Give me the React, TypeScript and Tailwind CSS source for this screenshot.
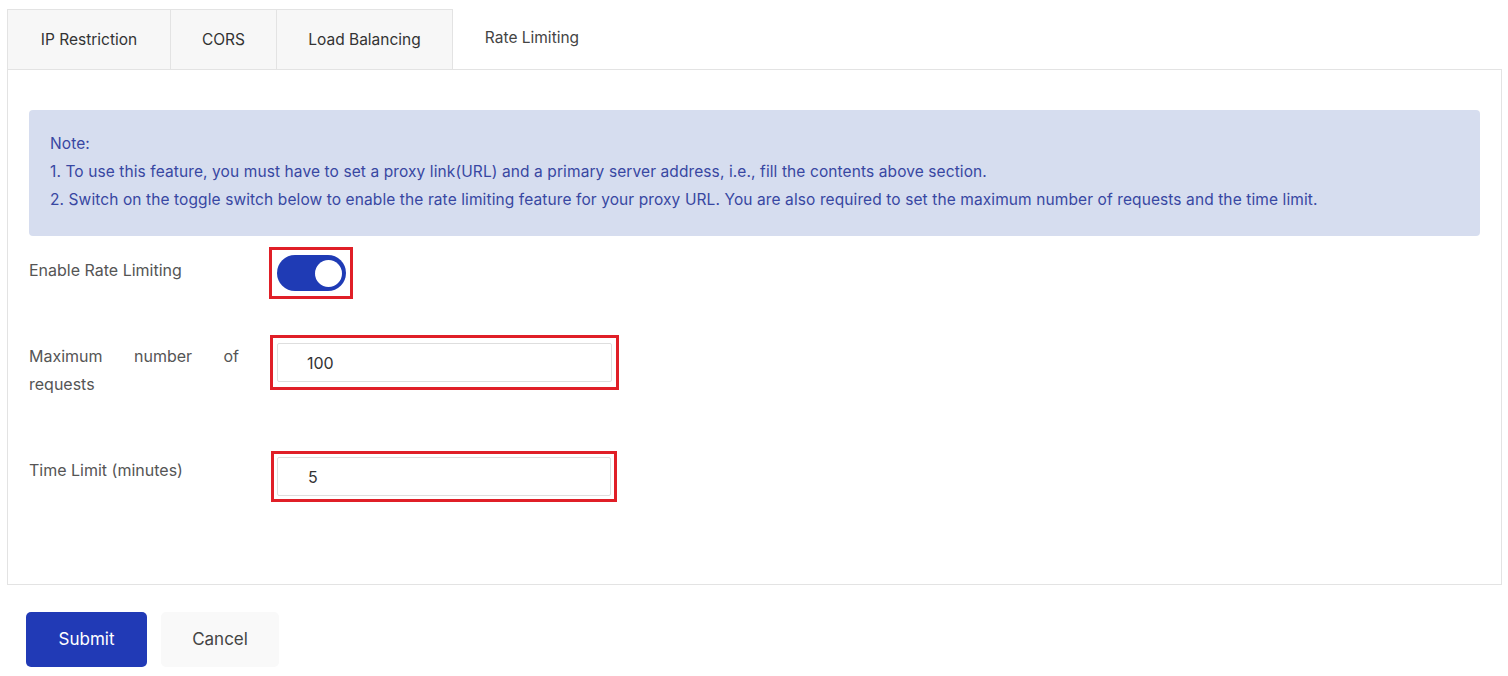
import { useState } from 'react';

const TABS = [
  { label: 'IP Restriction', w: 'w-[164px]' },
  { label: 'CORS', w: 'w-[106px]' },
  { label: 'Load Balancing', w: 'w-[176px]' },
  { label: 'Rate Limiting', w: 'w-[158px]' },
];

export default function App() {
  const [active, setActive] = useState(3);
  const [enabled, setEnabled] = useState(true);
  const [maxReq, setMaxReq] = useState('100');
  const [limit, setLimit] = useState('5');

  return (
    <div className="w-full h-[676px] bg-white pt-[9px] pl-[7px] pr-[6px] font-['Inter',sans-serif] text-[#333]">
      {/* Tabs */}
      <div className="flex h-[60px]">
        {TABS.map((t, i) => (
          <button
            key={t.label}
            onClick={() => setActive(i)}
            className={`${t.w} h-full text-[15.5px] ${
              i === active
                ? 'bg-white text-[#444] pb-[2px]'
                : 'bg-[#f7f7f7] border border-[#e3e3e3] border-b-0 border-l-0 first:border-l text-[#333]'
            }`}
          >
            {t.label}
          </button>
        ))}
      </div>

      {/* Panel */}
      <div className="border border-[#e3e3e3] h-[516px] px-[21px] pt-[40px]">
        <div className="bg-[#d6ddef] rounded-[4px] px-[21px] pt-[20px] pb-[22px] text-[15.5px] leading-[28px] tracking-[0.1px] text-[#3847a2]">
          <p>Note:</p>
          <p>1. To use this feature, you must have to set a proxy link(URL) and a primary server address, i.e., fill the contents above section.</p>
          <p>2. Switch on the toggle switch below to enable the rate limiting feature for your proxy URL. You are also required to set the maximum number of requests and the time limit.</p>
        </div>

        {/* Enable */}
        <div className="flex items-start mt-[11px]">
          <div className="w-[240px] text-[16px] text-[#555] leading-[28px] pt-[9px]">Enable Rate Limiting</div>
          <div className="border-[3px] border-[#e01f27] w-[84px] h-[52px] flex items-center justify-center">
            <button
              onClick={() => setEnabled(!enabled)}
              className={`w-[69px] h-[36px] rounded-full flex items-center px-[4px] ${
                enabled ? 'bg-[#1f3bb5] justify-end' : 'bg-[#ccc] justify-start'
              }`}
            >
              <span className="w-[27px] h-[27px] rounded-full bg-white block" />
            </button>
          </div>
        </div>

        {/* Max requests */}
        <div className="flex items-start h-[55px] mt-[36px]">
          <div className="w-[210px] text-[16px] text-[#555] leading-[28px] pt-[7px] text-justify [text-align-last:left]">
            Maximum number of requests
          </div>
          <div className="ml-[31px] border-[3px] border-[#e01f27] w-[349px] h-[55px] pt-[5px] px-[4px]">
            <input
              value={maxReq}
              onChange={(e) => setMaxReq(e.target.value)}
              className="w-full h-[39px] border border-[#dedede] rounded-[2px] pl-[29px] text-[16px] text-[#333] outline-none"
            />
          </div>
        </div>

        {/* Time limit */}
        <div className="flex items-start mt-[61px]">
          <div className="w-[210px] text-[16px] text-[#555] leading-[28px] pt-[5px]">Time Limit (minutes)</div>
          <div className="ml-[32px] border-[3px] border-[#e01f27] w-[346px] h-[51px] pt-[3px] px-[3px]">
            <input
              value={limit}
              onChange={(e) => setLimit(e.target.value)}
              className="w-full h-[39px] border border-[#dedede] rounded-[2px] pl-[30px] text-[16px] text-[#333] outline-none"
            />
          </div>
        </div>
      </div>

      {/* Actions */}
      <div className="flex gap-[14px] mt-[27px] ml-[19px]">
        <button className="w-[121px] h-[55px] bg-[#213ab6] text-white rounded-[5px] text-[17px]">Submit</button>
        <button className="w-[118px] h-[55px] bg-[#f9f9f9] text-[#444] rounded-[5px] text-[17px]">Cancel</button>
      </div>
    </div>
  );
}
